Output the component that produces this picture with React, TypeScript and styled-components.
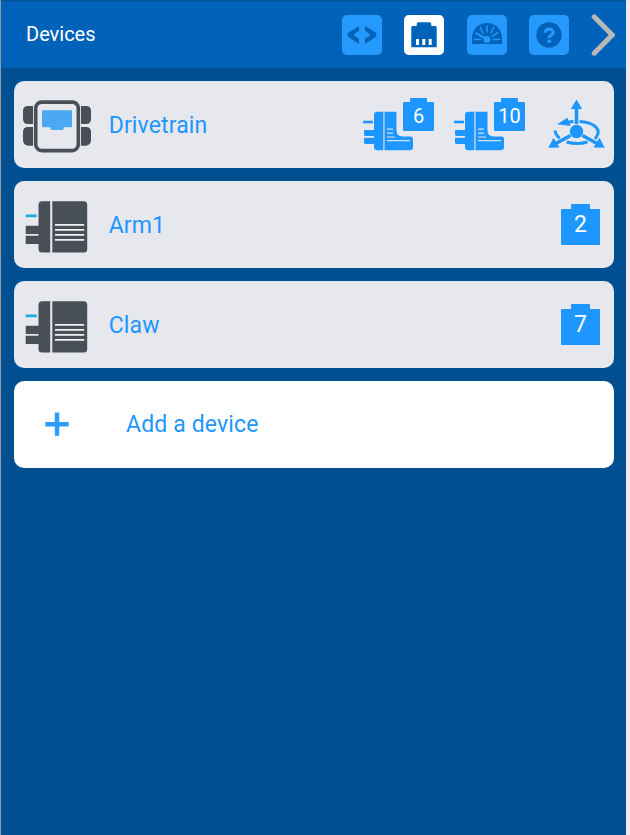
import React from "react";
import styled, { createGlobalStyle } from "styled-components";

const GlobalStyle = createGlobalStyle`
  body { margin: 0; background: #f4e8e7; overflow: hidden; }
  * { box-sizing: border-box; }
  svg { display: block; flex: none; }
`;

const Panel = styled.main`
  width: 626px;
  height: 835px;
  border-left: 1px solid #909ba6;
  background: #004f91;
  font-family: Roboto, sans-serif;
  color: #1e96ff;
`;

const Header = styled.header`
  display: flex;
  align-items: center;
  height: 68px;
  padding: 2px 11px 0 25px;
  background: linear-gradient(#004f91 0, #0062b8 2px);
`;

const Title = styled.h1`
  flex: 1;
  margin: 0 0 2px;
  font-size: 20px;
  line-height: 24px;
  font-weight: 400;
  color: #fff;
`;

const Toolbar = styled.nav`
  display: flex;
  gap: 22.3px;
  margin-right: 22px;
`;

const ToolButton = styled.button<{ $active?: boolean }>`
  width: 40px;
  height: 40px;
  padding: 0;
  border: 0;
  border-radius: 5px;
  color: #0062b8;
  background: ${(p) => (p.$active ? "#fff" : "#2699ff")};
`;

const DeviceList = styled.section`
  display: flex;
  flex-direction: column;
  gap: 13px;
  padding: 13px 12px 0 13px;
`;

const Card = styled.article<{ $plain?: boolean }>`
  display: flex;
  align-items: center;
  height: 87px;
  border-radius: 10px;
  background: ${(p) => (p.$plain ? "#fff" : "#e6e8ee")};
`;

const IconSlot = styled.div<{ $wide?: boolean }>`
  width: ${(p) => (p.$wide ? 112 : 94.7)}px;
  flex: none;
`;

const Name = styled.span<{ $raised?: boolean }>`
  flex: 1;
  font-size: 23px;
  line-height: 28px;
  letter-spacing: 0.14px;
  padding-top: ${(p) => (p.$raised ? 0 : 2)}px;
`;

const MotorGroup = styled.div`
  display: flex;
  align-items: flex-start;
  margin-right: 20px;
  height: 53px;
`;

const PortTag = styled.div<{ $small?: boolean }>`
  display: flex;
  flex-direction: column;
  align-items: center;
  width: ${(p) => (p.$small ? 31 : 39)}px;
  height: ${(p) => (p.$small ? 33 : 41)}px;
  margin-right: ${(p) => (p.$small ? 0 : 14)}px;
`;

const PortTab = styled.div<{ $small?: boolean }>`
  width: ${(p) => (p.$small ? 17 : 19)}px;
  height: ${(p) => (p.$small ? 4 : 5)}px;
  border-radius: 1px 1px 0 0;
  background: #1e96ff;
`;

const PortBody = styled.div<{ $small?: boolean }>`
  width: 100%;
  flex: 1;
  border-radius: 1px;
  background: #1e96ff;
  color: #fff;
  text-align: center;
  font-size: ${(p) => (p.$small ? 20 : 23)}px;
  line-height: ${(p) => (p.$small ? 29 : 31)}px;
`;

const Port = ({ number, small }: { number: number; small?: boolean }) => (
  <PortTag $small={small}>
    <PortTab $small={small} />
    <PortBody $small={small}>{number}</PortBody>
  </PortTag>
);

const CodeIcon = () => (
  <svg width="40" height="40" fill="currentColor">
    <path d="M5.7 18 17 11v4.8L11.3 19.8 17 23.8V29L5.7 21.5ZM34.3 18 23 11v4.8l5.7 4L23 23.8V29l11.3-7.5Z" />
  </svg>
);

const PortIcon = () => (
  <svg width="40" height="40">
    <path fill="currentColor" d="M12.7 11V9q0-1.7 1.7-1.7h11.2q1.7 0 1.7 1.7v2h4q1.4 0 1.4 1.4V32.3H7.3V12.4q0-1.4 1.4-1.4Z" />
    <path fill="#fff" d="M12 24h3v6h-3zM18.300 24h3v6h-3zM24.700 24h3v6h-3z" />
  </svg>
);

const GaugeIcon = () => (
  <svg width="40" height="40">
    <path fill="currentColor" d="M5 29v-6C5 14.500 11.500 8 20 8s15 6.500 15 15v6Z" />
    <path stroke="#2699ff" strokeWidth="1.500" strokeLinecap="round" fill="none" d="M7.500 24.400h6M26.500 24.400h6M20 11.200v5.800M13.300 12.500l2.700 5.500M26.700 12.500 24 18M30.800 17.600l-5.300 3.600" />
    <path stroke="#2699ff" strokeWidth="2" strokeLinecap="round" d="m20 24.400-10.500-6" />
    <circle cx="20" cy="24.400" r="3.400" fill="#2699ff" />
  </svg>
);

const HelpIcon = () => (
  <svg width="40" height="40">
    <circle cx="20" cy="20" r="12.700" fill="currentColor" />
    <path fill="none" stroke="#2699ff" strokeWidth="3.200" d="M16.200 17.800c0-5 8-4.800 8-.3 0 3-4.100 2.400-4.100 5.500" />
    <path fill="#2699ff" d="M18.400 24.700H22v3h-3.600z" />
  </svg>
);

const ChevronIcon = () => (
  <svg width="24" height="42" fill="none" stroke="#b9b9b9" strokeWidth="5" strokeLinecap="round">
    <path d="m3.200 2.800 18 18.200-18 18.200" />
  </svg>
);

const DrivetrainIcon = () => (
  <svg width="95" height="87">
    <path fill="#484f56" d="M19 25h-5q-5 0-5 5v8q0 5 5 5h5zM67 25h5q5 0 5 5v8q0 5-5 5h-5zM19 46h-5q-5 0-5 5v8q0 5 5 5.700h5zM67 46h5q5 0 5 5v8q0 5-5 5.700h-5z" />
    <rect x="21.700" y="21.100" width="42.600" height="48.500" rx="6" fill="none" stroke="#484f56" strokeWidth="3.600" />
    <path fill="#4ba9f1" d="M29 29.200h28q1 0 1 1v15q0 1-1 1h-7.300v1.300q0 1.500-1.500 1.500h-10.200q-1.500 0-1.500-1.500v-1.300H29q-1 0-1-1v-15q0-1 1-1Z" />
  </svg>
);

const MotorIcon = () => (
  <svg width="95" height="87">
    <path fill="#17acdf" d="M11.700 33.500h11v2.700h-11z" />
    <path fill="#484f56" d="M24.500 44.800V24q0-3.700 3.500-3.700h8.200v51.200H28q-3.500 0-3.500-3.500v-5H11.700v-8.300h12.800V53H11.700v-8.200ZM38.300 20.300H70q3.200 0 3.200 3.700v44q0 3.500-3.200 3.500H38.300Z" />
    <path stroke="#f0f1f4" strokeWidth="1.800" d="M41 43.900h29.200M41 48.900h29.200M41 53.900h29.200M41 58.900h29.200" />
  </svg>
);

const SmallMotorIcon = () => (
  <svg width="40" height="53" overflow="visible">
    <path fill="#1e96ff" d="M0 22.700h10v2.600H0z" />
    <path fill="#1e96ff" d="M11 32V17q0-3.300 3.300-3.300h6.100v38.600h-6.100Q11 52.300 11 49v-3H2.500q-1.500 0-1.500-1.500V39.700h10v-1.600H2.500Q1 38.100 1 36.600V32ZM21.500 13.700h12V32q0 6.500 6 6.500h8q2.500 0 2.500 2.500v8q0 3.300-3.300 3.300H21.500Z" />
    <path stroke="#d3e6f8" strokeWidth="1.200" d="M24 31.200h6M24 35.200h6M24 39h8M24 42.600h23" />
  </svg>
);

const Boot = styled.div`
  width: 40px;
  height: 53px;
`;

const DriveMotor = ({ port }: { port: number }) => (
  <MotorGroup>
    <Boot><SmallMotorIcon /></Boot>
    <Port number={port} small />
  </MotorGroup>
);

const InertialSlot = styled.div`
  margin: 0 9.500px 0 2.500px;
`;

const InertialIcon = () => (
  <svg width="57" height="52" fill="none" stroke="#1e96ff">
    <path strokeWidth="3" d="M18 23.800c2-.6 5-1.100 7.500-1.300M31.500 22.500c13.500.8 21 6.700 18 13.500-.6 1.500-1.500 2.700-2.800 3.700M7.200 31.500c.1 3.200 1.300 5.400 4.500 7.700M18.500 43c6.500 1.900 14.500 1.900 21 0" />
    <path strokeWidth="3.600" d="M28.500 25V9M22.500 36.500 8 44.500M34.500 36.500l14.500 8" />
    <circle cx="28.500" cy="32.500" r="6.700" fill="#1e96ff" stroke="none" />
    <path fill="#1e96ff" stroke="none" d="m28.500.500 5.700 9.500H22.800ZM9 25.300l10.500-6.500L22.500 27ZM.3 48.700l5.200-10 6 9.800ZM56.700 48.700l-5.200-10-6 9.800Z" />
  </svg>
);

const PlusIcon = () => (
  <svg width="112" height="87" stroke="#2a9dff" strokeWidth="4.400">
    <path d="M31.300 43.300h23.400M43 31.500v23.300" />
  </svg>
);

export default function App() {
  return (
    <>
      <GlobalStyle />
      <Panel>
        <Header>
          <Title>Devices</Title>
          <Toolbar>
            <ToolButton aria-label="Code"><CodeIcon /></ToolButton>
            <ToolButton $active aria-label="Devices"><PortIcon /></ToolButton>
            <ToolButton aria-label="Monitor"><GaugeIcon /></ToolButton>
            <ToolButton aria-label="Help"><HelpIcon /></ToolButton>
          </Toolbar>
          <ChevronIcon />
        </Header>
        <DeviceList>
          <Card>
            <IconSlot><DrivetrainIcon /></IconSlot>
            <Name>Drivetrain</Name>
            <DriveMotor port={6} />
            <DriveMotor port={10} />
            <InertialSlot><InertialIcon /></InertialSlot>
          </Card>
          <Card>
            <IconSlot><MotorIcon /></IconSlot>
            <Name>Arm1</Name>
            <Port number={2} />
          </Card>
          <Card>
            <IconSlot><MotorIcon /></IconSlot>
            <Name>Claw</Name>
            <Port number={7} />
          </Card>
          <Card $plain>
            <IconSlot $wide><PlusIcon /></IconSlot>
            <Name $raised>Add a device</Name>
          </Card>
        </DeviceList>
      </Panel>
    </>
  );
}
